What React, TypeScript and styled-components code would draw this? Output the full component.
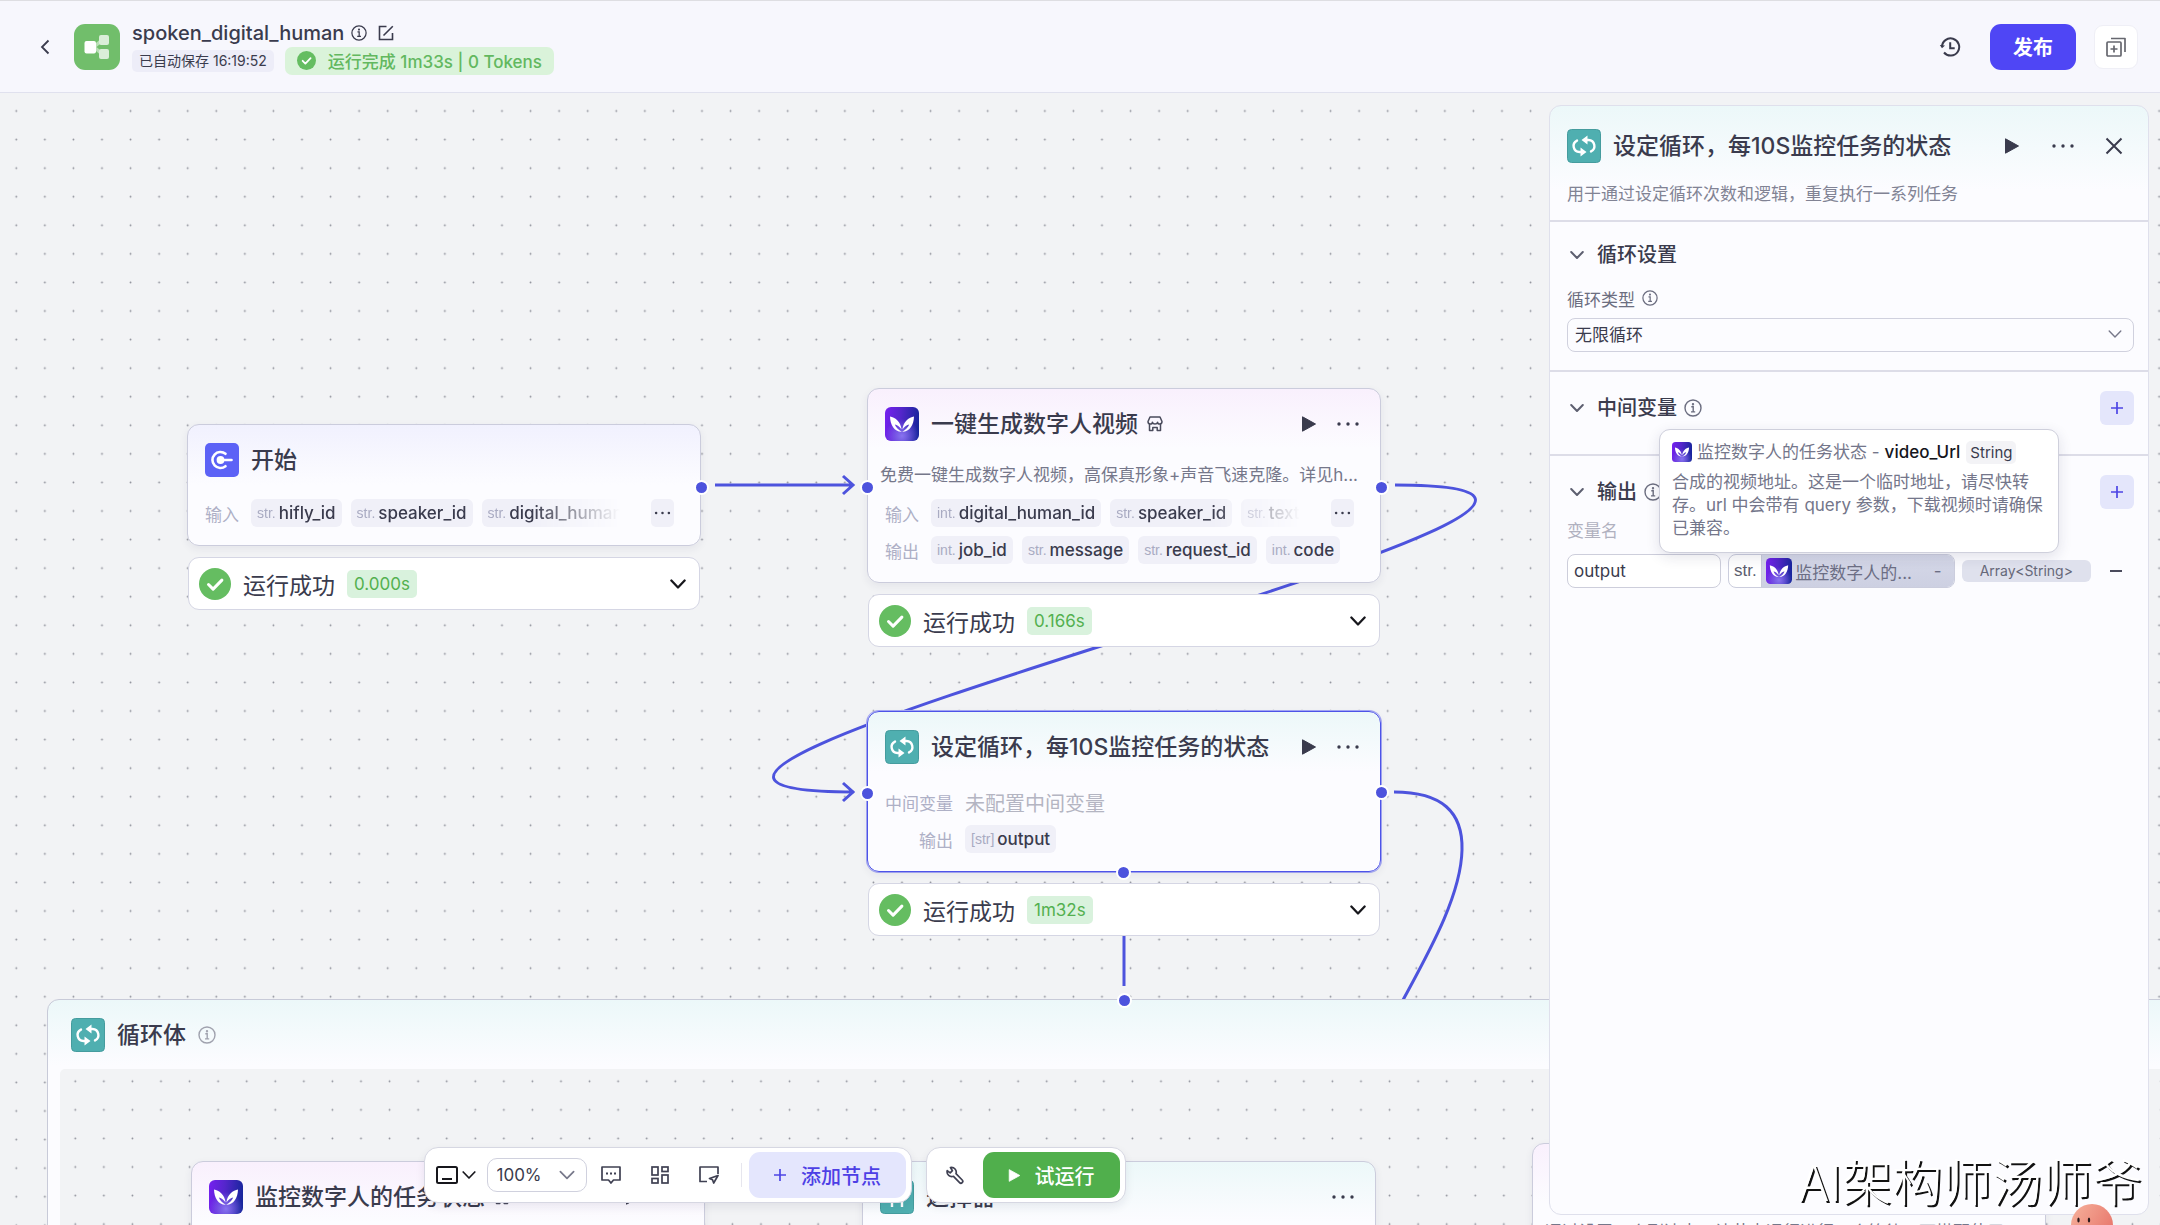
import React from 'react';
import styled, { createGlobalStyle, css } from 'styled-components';

const GlobalStyle = createGlobalStyle`
  * { box-sizing: border-box; }
  body {
    margin: 0;
    font-family: Inter, 'Noto Sans CJK SC', sans-serif;
    font-size: 17px;
    color: #3a3b4d;
    background: #f2f3f5;
  }
  button, input, select { font: inherit; color: inherit; }
  button { border: 0; padding: 0; background: none; cursor: pointer; }
  h1, h2, h3, p { margin: 0; }
  svg { display: block; flex: none; }
`;

const tint = { start: '#f1f1fe', plugin: '#f9f0fd', loop: '#ecf8f9' };
type Kind = keyof typeof tint;

/* ---------- shell ---------- */

const Shell = styled.div`
  position: relative;
  display: flex;
  flex-direction: column;
  height: 100vh;
  overflow: hidden;
`;

const TopBar = styled.header`
  position: relative;
  z-index: 2;
  display: flex;
  align-items: center;
  flex: none;
  height: 93px;
  padding: 0 22px 0 32px;
  background: #f7f7fd;
  border-top: 1px solid #dedee2;
  border-bottom: 1px solid #e0e1ee;
`;

const BackButton = styled.button`
  display: grid;
  place-items: center;
  width: 26px;
  height: 32px;
  margin-right: 16px;
`;

const Heading = styled.div`
  display: flex;
  flex-direction: column;
  flex: 1;
  margin-left: 12px;
`;

const HeadLine = styled.div`
  display: flex;
  align-items: center;
  gap: 7px;
  height: 28px;
`;

const ProjectName = styled.h1`
  font-size: 20px;
  font-weight: 500;
  line-height: 28px;
`;

const SavedTag = styled.span`
  margin-right: 4px;
  padding: 0 7px;
  border-radius: 5px;
  background: #ededf8;
  font-size: 14px;
  line-height: 22px;
`;

const RunTag = styled.span`
  display: flex;
  align-items: center;
  gap: 12px;
  height: 28px;
  padding: 0 12px;
  border-radius: 7px;
  background: #daf3da;
  color: #62b85f;
  font-size: 17px;
  font-weight: 500;
`;

const PublishButton = styled.button`
  width: 86px;
  height: 46px;
  margin: 0 18px 0 28px;
  border-radius: 11px;
  background: #4f46f5;
  color: #fff;
  font-size: 20px;
  font-weight: 600;
`;

const SquareButton = styled.button`
  display: grid;
  place-items: center;
  width: 44px;
  height: 44px;
  border-radius: 9px;
  border: 1px solid #efeff6;
  background: #fff;
`;

const PlainButton = styled.button`
  display: grid;
  place-items: center;
  flex: none;
  width: 24px;
  height: 28px;
`;

const Workspace = styled.main`
  position: relative;
  z-index: 1;
  display: flex;
  flex: 1;
  min-height: 0;
  padding: 12px 11px 10px 0;
  pointer-events: none;
  > * > *, > aside { pointer-events: auto; }
`;

const Stage = styled.div`
  display: flex;
  flex: 1;
  justify-content: center;
  align-items: flex-end;
  gap: 14px;
  padding-bottom: 12px;
`;

/* ---------- canvas ---------- */

const Board = styled.div`
  position: absolute;
  inset: 0;
  overflow: hidden;
`;

const Layer = styled.svg`
  position: absolute;
  inset: 0;
  width: 100%;
  height: 100%;
`;

const Placed = styled.div<{ $x: number; $y: number }>`
  position: absolute;
  left: ${p => p.$x}px;
  top: ${p => p.$y}px;
  width: 514px;
`;

const Card = styled.section<{ $kind: Kind; $active?: boolean }>`
  position: relative;
  padding: 17px 17px 18px;
  border: 1px solid ${p => (p.$active ? '#4d53e8' : '#cbccdc')};
  box-shadow: 0 3px 8px rgba(40, 40, 80, 0.07)${p => (p.$active ? ', 0 0 0 1px #a4a7f4' : '')};
  border-radius: 12px;
  background: linear-gradient(${p => tint[p.$kind]}, #fcfcff 60px);
`;

const CardHead = styled.div<{ $gap: number }>`
  display: flex;
  align-items: center;
  height: 35px;
  margin-bottom: ${p => p.$gap}px;
`;

const CardTitle = styled.h2`
  margin: 0 9px 0 12px;
  font-size: 23px;
  font-weight: 500;
  line-height: 34px;
  white-space: nowrap;
`;

const CardTools = styled.div`
  display: flex;
  gap: 15px;
  margin-left: auto;
  padding-right: 3px;
`;

const CardText = styled.p`
  margin: 0 -5px 12px;
  line-height: 24px;
  color: #75778a;
  white-space: nowrap;
`;

const Field = styled.div<{ $wide?: boolean }>`
  display: grid;
  grid-template-columns: ${p => (p.$wide ? '68px' : '34px')} minmax(0, 1fr);
  gap: 12px;
  align-items: center;
  height: 28px;
  & + & { margin-top: 9px; }
`;

const FieldName = styled.span`
  color: #aeb0c6;
  text-align: right;
  white-space: nowrap;
`;

const FieldBody = styled.div`
  display: flex;
  align-items: center;
  min-width: 0;
`;

const Chips = styled.div<{ $fade?: boolean }>`
  display: flex;
  flex: 1;
  gap: 9px;
  min-width: 0;
  overflow: hidden;
  ${p => p.$fade && css`
    mask-image: linear-gradient(to left, transparent 22px, #000 110px);
  `}
`;

const Chip = styled.span`
  display: flex;
  align-items: center;
  gap: 3px;
  flex: none;
  height: 28px;
  padding: 0 6px;
  border-radius: 6px;
  background: #f0f0f8;
  font-weight: 500;
`;

const TypeMark = styled.span`
  font-family: 'Liberation Sans', sans-serif;
  font-size: 14px;
  font-weight: 400;
  color: #a9abc2;
`;

const MoreChip = styled.button`
  display: grid;
  place-items: center;
  flex: none;
  width: 23px;
  height: 28px;
  margin: 0 9px;
  border-radius: 5px;
  background: #f0f0f8;
`;

const Muted = styled.span`
  font-size: 20px;
  color: #b4b5c2;
`;

const StatusBar = styled.div`
  display: flex;
  align-items: center;
  height: 53px;
  margin: 11px 1px 0;
  padding: 0 9px 0 10px;
  border: 1px solid #d5d6e4;
  border-radius: 11px;
  background: #fff;
  font-size: 23px;
`;

const StatusText = styled.span`
  margin: 0 12px;
`;

const StatusTime = styled.span`
  margin-right: auto;
  padding: 0 7px;
  border-radius: 5px;
  background: #d9f2dd;
  color: #53b04f;
  font-size: 17px;
  line-height: 28px;
`;

const Port = styled.i<{ $side: 'left' | 'right' | 'middle'; $y: number }>`
  position: absolute;
  top: ${p => p.$y - 8}px;
  ${p => p.$side === 'left' && 'left: -8px;'}
  ${p => p.$side === 'right' && 'right: -9px;'}
  ${p => p.$side === 'middle' && 'left: calc(50% - 8px);'}
  width: 15px;
  height: 15px;
  border: 2px solid #fff;
  border-radius: 50%;
  background: #4d53dd;
`;

const LoopFrame = styled.section`
  position: absolute;
  left: 47px;
  top: 999px;
  right: -40px;
  height: 480px;
  padding: 0 12px;
  border: 1px solid #c8cad8;
  border-radius: 12px;
  background: linear-gradient(${tint.loop}, #fcfcff 66px);
`;

const LoopHead = styled.div`
  display: flex;
  align-items: center;
  height: 69px;
  padding-left: 11px;
`;

const LoopInner = styled.div`
  position: relative;
  height: 400px;
  border-radius: 5px;
  overflow: hidden;
  background: #f2f3f5;
`;

const LoopPort = styled.i`
  position: absolute;
  left: 1117px;
  top: 993px;
  width: 15px;
  height: 15px;
  border: 2px solid #fff;
  border-radius: 50%;
  background: #4d53dd;
`;

/* ---------- bottom toolbar ---------- */

const Dock = styled.div`
  display: flex;
  align-items: center;
  height: 56px;
  padding: 0 5px 0 11px;
  border: 1px solid #d6d7e2;
  border-radius: 14px;
  background: #fff;
  box-shadow: 0 4px 10px rgba(30, 30, 70, 0.08);
`;

const DockIcon = styled.button`
  display: grid;
  place-items: center;
  width: 49px;
  height: 32px;
`;

const DebugButton = styled(DockIcon)`
  width: 33px;
  margin-right: 12px;
`;

const DockMode = styled.button`
  display: flex;
  align-items: center;
  gap: 4px;
  height: 32px;
  margin-right: 11px;
`;

const Pick = styled.span<{ $w: string; $radius: number }>`
  position: relative;
  display: block;
  width: ${p => p.$w};
  height: 34px;
  > select {
    width: 100%;
    height: 100%;
    padding: 0 ${p => p.$radius - 1}px;
    border: 1px solid #d0d1de;
    border-radius: ${p => p.$radius}px;
    background: transparent;
    appearance: none;
  }
  > svg {
    position: absolute;
    right: 12px;
    top: 9px;
    pointer-events: none;
  }
`;

const Rule = styled.i`
  width: 1px;
  height: 24px;
  margin: 0 7px;
  background: #e6e6ee;
`;

const WideButton = styled.button<{ $w: number; $fill: string; $ink: string }>`
  display: flex;
  align-items: center;
  justify-content: center;
  gap: 14px;
  width: ${p => p.$w}px;
  height: 46px;
  border-radius: 11px;
  background: ${p => p.$fill};
  color: ${p => p.$ink};
  font-size: 20px;
  font-weight: 500;
`;

/* ---------- side panel ---------- */

const Panel = styled.aside`
  position: relative;
  width: 600px;
  border: 1px solid #dfe0ec;
  border-radius: 12px;
  background: linear-gradient(${tint.loop}, #fcfcff 84px);
`;

const PanelHead = styled.div`
  padding: 23px 15px 14px 17px;
  border-bottom: 2px solid #dddde8;
`;

const PanelTitleRow = styled.div`
  display: flex;
  align-items: center;
  height: 34px;
  margin-bottom: 19px;
`;

const PanelTools = styled.div`
  display: flex;
  gap: 27px;
  margin-left: auto;
  padding-right: 7px;
`;

const PanelText = styled.p`
  line-height: 24px;
  color: #818394;
`;

const Section = styled.section<{ $foot: number; $last?: boolean }>`
  padding: 19px 14px ${p => p.$foot}px 17px;
  border-bottom: ${p => (p.$last ? '0' : '2px solid #dddde8')};
`;

const SectionHead = styled.div<{ $h: number }>`
  display: flex;
  align-items: center;
  height: ${p => p.$h}px;
`;

const SectionTitle = styled.h3`
  margin: 0 7px 0 10px;
  font-size: 20px;
  font-weight: 500;
  line-height: 28px;
`;

const FoldButton = styled.button`
  display: grid;
  place-items: center;
  width: 20px;
  height: 28px;
`;

const AddButton = styled.button`
  display: grid;
  place-items: center;
  width: 34px;
  height: 34px;
  margin-left: auto;
  border-radius: 6px;
  background: #e4e6fb;
`;

const Label = styled.label`
  display: flex;
  align-items: center;
  gap: 7px;
  height: 24px;
  margin: 17px 0 8px;
  color: #6c6e80;
`;

const ColumnLabel = styled.label`
  display: block;
  margin: 10px 0 11px;
  line-height: 24px;
  color: #b0b1bf;
`;

const OutputRow = styled.div`
  display: grid;
  grid-template-columns: 154fr 226fr 129fr 36fr;
  gap: 7px;
  align-items: center;
`;

const TextBox = styled.input`
  min-width: 0;
  height: 34px;
  padding: 0 6px;
  border: 1px solid #cdcedb;
  border-radius: 8px;
  background: #fff;
`;

const RefBox = styled.button`
  display: flex;
  height: 34px;
  min-width: 0;
  border: 1px solid #cbcddd;
  border-radius: 8px;
  overflow: hidden;
  background: #fff;
`;

const RefType = styled.span`
  width: 32px;
  font-family: 'Liberation Sans', sans-serif;
  line-height: 32px;
  color: #5d5f71;
`;

const RefValue = styled.span`
  display: flex;
  align-items: center;
  gap: 3px;
  flex: 1;
  height: 32px;
  padding: 0 12px 0 4px;
  border-left: 1px solid #c9cbda;
  background: linear-gradient(#d5d8e8, #cdd0e2);
  color: #6c6e84;
  white-space: nowrap;
`;

const RefName = styled.span`
  flex: 1;
  text-align: left;
`;

const TypeTag = styled.span`
  border-radius: 6px;
  background: #dfe1ed;
  color: #666879;
  font-size: 14px;
  line-height: 22px;
  text-align: center;
`;

const RemoveButton = styled.button`
  display: grid;
  place-items: center;
  height: 34px;
`;

const Tip = styled.div`
  position: absolute;
  left: 109px;
  top: 323px;
  width: 400px;
  padding: 10px 12px 12px;
  border: 1px solid #cfd0dc;
  border-radius: 11px;
  background: #fff;
  box-shadow: 0 4px 14px rgba(30, 30, 70, 0.12);
  color: #74768a;
  line-height: 23px;
`;

const TipHead = styled.div`
  display: flex;
  align-items: center;
  height: 24px;
  margin-bottom: 7px;
  white-space: nowrap;
  > strong { margin: 0 6px 0 5px; font-weight: 500; color: #15151c; }
  > span { margin-left: 5px; }
`;

const TipType = styled.em`
  padding: 0 4px;
  border-radius: 5px;
  background: #f3f3f6;
  color: #3a3b4d;
  font-size: 15px;
  font-style: normal;
`;

/* ---------- watermark and assistant ---------- */

const Watermark = styled.div`
  position: absolute;
  z-index: 3;
  right: 18px;
  bottom: 11px;
  color: #fff;
  font-family: 'Noto Sans CJK SC', sans-serif;
  font-size: 50px;
  font-weight: 300;
  line-height: 70px;
  text-shadow: 2px 2px 0 #111;
  white-space: nowrap;
`;

const Mascot = styled.svg`
  position: absolute;
  z-index: 2;
  right: 46px;
  bottom: 0;
`;

/* ---------- drawings ---------- */

const ButterflyIcon = ({ size = 34 }: { size?: number }) => {
  const id = React.useId();
  return (
    <svg width={size} height={size} viewBox="0 0 34 34">
      <defs>
        <linearGradient id={id} x1="0" y1="0.3" x2="1" y2="0.4">
          <stop offset="0" stopColor="#7420ee" />
          <stop offset="0.45" stopColor="#5426cb" />
          <stop offset="1" stopColor="#17259c" />
        </linearGradient>
        <radialGradient id={`${id}g`} cx="0.5" cy="0.85" r="0.5">
          <stop offset="0" stopColor="#8f7cf5" stopOpacity="0.9" />
          <stop offset="1" stopColor="#8f7cf5" stopOpacity="0" />
        </radialGradient>
      </defs>
      <rect width="34" height="34" rx="6" fill={`url(#${id})`} />
      <rect width="34" height="34" rx="6" fill={`url(#${id}g)`} />
      <g fill="#fff">
        <path d="M5 9.5C10 10.5 15.500 14 16.600 22.500C14.500 19.500 12 17.800 9.800 17.600C10.800 20.500 13.500 23.200 16.800 24.800C9.500 25 5.200 18 5 9.500Z" />
        <path d="M29 9.5C24 10.5 18.500 14 17.400 22.500C19.500 19.500 22 17.800 24.200 17.600C23.200 20.500 20.500 23.200 17.200 24.800C24.500 25 28.800 18 29 9.500Z" />
      </g>
    </svg>
  );
};

const LoopIcon = () => (
  <svg width="34" height="34" viewBox="0 0 34 34">
    <rect x="0.500" y="0.500" width="33" height="33" rx="4" fill="#4fafb0" stroke="#459c9e" />
    <g fill="none" stroke="#fff" strokeWidth="2.4" strokeLinecap="round">
      <path d="M19 11h2.500a6 6 0 0 1 2.500 11.400" />
      <path d="M15 23h-2.500a6 6 0 0 1-2.500-11.400" />
    </g>
    <path d="M14.500 11l6-4.500v9z M19.500 23l-6 4.500v-9z" fill="#fff" />
  </svg>
);

const StartIcon = () => (
  <svg width="34" height="34" viewBox="0 0 34 34">
    <rect width="34" height="34" rx="5" fill="#5c62f6" />
    <path d="M20.500 10.800a8 8 0 1 0 0 12.400" fill="none" stroke="#fff" strokeWidth="2.600" strokeLinecap="round" />
    <circle cx="15.500" cy="17" r="3.900" fill="#fff" />
    <path d="M16 17h10.500" stroke="#fff" strokeWidth="2.600" strokeLinecap="round" />
  </svg>
);

const BranchIcon = () => (
  <svg width="34" height="34" viewBox="0 0 34 34">
    <rect x="0.500" y="0.500" width="33" height="33" rx="4" fill="#4fafb0" stroke="#459c9e" />
    <path d="M12 27V12M12 12l-4 4M22 27V10M22 18h-9" fill="none" stroke="#fff" strokeWidth="2.400" />
  </svg>
);

const Logo = () => (
  <svg width="46" height="46" viewBox="0 0 46 46">
    <rect width="46" height="46" rx="11" fill="#71be6b" />
    <path d="M20 23L28 16M20 23L28 30" stroke="#b9dfb6" strokeWidth="3.500" />
    <rect x="25" y="11" width="10" height="10" rx="2" fill="#daeed8" />
    <rect x="25" y="25" width="10" height="10" rx="2" fill="#daeed8" />
    <rect x="10.500" y="17" width="11.500" height="12.500" rx="2" fill="#fff" />
  </svg>
);

const InfoIcon = ({ size = 18, color = '#6c6e80' }: { size?: number; color?: string }) => (
  <svg width={size} height={size} viewBox="0 0 18 18" fill="none" stroke={color} strokeWidth="1.400">
    <circle cx="9" cy="9" r="8" />
    <path d="M7.300 7.800h1.900v5M7 12.900h4.200" />
    <circle cx="9" cy="5.200" r="0.500" fill={color} />
  </svg>
);

const Chevron = ({ w = 14, color = '#17171c', stroke = 2 }: { w?: number; color?: string; stroke?: number }) => (
  <svg width={w} height={w} viewBox="0 0 14 14" fill="none" stroke={color} strokeWidth={stroke} strokeLinecap="round" strokeLinejoin="round">
    <path d="M1.200 4l5.800 6 5.800-6" />
  </svg>
);

const PlayIcon = ({ w = 16, color = '#3a3b4d' }: { w?: number; color?: string }) => (
  <svg width={w} height={w} viewBox="0 0 16 16">
    <path d="M1.500 0.800L14.500 8L1.500 15.200Z" fill={color} stroke={color} strokeLinejoin="round" />
  </svg>
);

const DotsIcon = ({ w = 24, r = 1.7 }: { w?: number; r?: number }) => (
  <svg width={w} height="6" viewBox="0 0 24 6" fill="#3a3b4d">
    <circle cx="3" cy="3" r={r} />
    <circle cx="12" cy="3" r={r} />
    <circle cx="21" cy="3" r={r} />
  </svg>
);

const PlusIcon = ({ color = '#4d46e5' }: { color?: string }) => (
  <svg width="14" height="14" viewBox="0 0 14 14" stroke={color} strokeWidth="1.700">
    <path d="M7 1v12M1 7h12" />
  </svg>
);

const CheckIcon = ({ size }: { size: number }) => (
  <svg width={size} height={size} viewBox="0 0 32 32">
    <circle cx="16" cy="16" r="16" fill="#65bd61" />
    <path d="M9.500 16.500l4.600 4.600 8.800-9" fill="none" stroke="#fff" strokeWidth="3" strokeLinecap="round" strokeLinejoin="round" />
  </svg>
);

const ShopIcon = () => (
  <svg width="16" height="16" viewBox="0 0 16 16" fill="none" stroke="#4a4b5c" strokeWidth="1.500" strokeLinejoin="round">
    <path d="M3 1h10l2 4.500c0 2-1.500 2.500-2.300 2.500C11.500 8 10.600 7 10.600 6.200 10.300 7.400 9.200 8 8 8S5.700 7.400 5.400 6.200C5.400 7 4.500 8 3.300 8 2.500 8 1 7.500 1 5.500z" />
    <path d="M2.500 8v6.500h3.300v-3h4.400v3h3.300V8" />
  </svg>
);

/* ---------- composed parts ---------- */

const TypedChip = ({ type, name }: { type: string; name: string }) => (
  <Chip>
    <TypeMark>{type}</TypeMark>
    {name}
  </Chip>
);

const RunStatus = ({ time }: { time: string }) => (
  <StatusBar>
    <CheckIcon size={32} />
    <StatusText>运行成功</StatusText>
    <StatusTime>{time}</StatusTime>
    <PlainButton aria-label="展开">
      <Chevron w={16} />
    </PlainButton>
  </StatusBar>
);

const NodeTools = () => (
  <CardTools>
    <PlainButton aria-label="运行"><PlayIcon /></PlainButton>
    <PlainButton aria-label="更多"><DotsIcon /></PlainButton>
  </CardTools>
);

const More = () => (
  <MoreChip aria-label="更多变量"><DotsIcon w={17} r={1.8} /></MoreChip>
);

const GridPattern = ({ id, x, y }: { id: string; x: number; y: number }) => (
  <>
    <defs>
      <pattern id={id} width="20" height="20" patternUnits="userSpaceOnUse" patternTransform={`translate(${x} ${y}) scale(${10 / 7})`}>
        <circle cx="10" cy="10" r="0.640" fill="#8c8e98" />
      </pattern>
    </defs>
    <rect width="100%" height="100%" fill={`url(#${id})`} />
  </>
);

export default function App() {
  return (
    <Shell>
      <GlobalStyle />
      <TopBar>
        <BackButton aria-label="返回">
          <svg width="10" height="16" viewBox="0 0 10 16" fill="none" stroke="#3a3b4d" strokeWidth="1.800"><path d="M8.500 1.500L2 8l6.500 6.500" /></svg>
        </BackButton>
        <Logo />
        <Heading>
          <HeadLine>
            <ProjectName>spoken_digital_human</ProjectName>
            <InfoIcon size={16} color="#3a3b4d" />
            <PlainButton aria-label="编辑">
              <svg width="16" height="16" viewBox="0 0 16 16" fill="none" stroke="#3a3b4d" strokeWidth="1.600"><path d="M8.500 1.500H1.500v13h13V8M5.500 10.500L14.800 1.200" /></svg>
            </PlainButton>
          </HeadLine>
          <HeadLine>
            <SavedTag>已自动保存 16:19:52</SavedTag>
            <RunTag>
              <CheckIcon size={19} />
              运行完成 1m33s | 0 Tokens
            </RunTag>
          </HeadLine>
        </Heading>
        <PlainButton aria-label="历史">
          <svg width="22" height="22" viewBox="0 0 22 22" fill="none" stroke="#3a3b4d" strokeWidth="2">
            <path d="M3 11a8.600 8.600 0 1 1 2 5.500" />
            <path d="M11.200 6.200v6h4.500" />
            <path d="M0.800 9l2.200 3.200L6 9.400z" fill="#3a3b4d" stroke="none" />
          </svg>
        </PlainButton>
        <PublishButton>发布</PublishButton>
        <SquareButton aria-label="创建副本">
          <svg width="20" height="20" viewBox="0 0 20 20" fill="none" stroke="#66676f" strokeWidth="1.700" strokeLinejoin="round">
            <rect x="1" y="5" width="14" height="14" rx="1" />
            <path d="M5 1.500h14V15M8 8.500v7M4.500 12h7" />
          </svg>
        </SquareButton>
      </TopBar>

      <Board>
        <Layer>
          <GridPattern id="grid" x={2} y={11} />
          <g fill="none" stroke="#4d53dd" strokeWidth="3">
            <path d="M715 485H853M843 476l10 9-10 9" />
            <path d="M1395 485C1815 485 434 792 854 792M843 783l10 9-10 9" />
            <path d="M1394 792C1442 792 1463 812 1462 850C1461 895 1430 950 1403 1000" />
            <path d="M1124 930V986" />
          </g>
        </Layer>

        <LoopFrame>
          <LoopHead>
            <LoopIcon />
            <CardTitle>循环体</CardTitle>
            <PlainButton aria-label="说明"><InfoIcon color="#a0a2ae" /></PlainButton>
          </LoopHead>
          <LoopInner>
            <Layer><GridPattern id="grid-inner" x={1} y={-2} /></Layer>
          </LoopInner>
        </LoopFrame>
        <LoopPort />

        <Placed $x={187} $y={424}>
          <Card $kind="start">
            <CardHead $gap={22}>
              <StartIcon />
              <CardTitle>开始</CardTitle>
            </CardHead>
            <Field>
              <FieldName>输入</FieldName>
              <FieldBody>
                <Chips $fade>
                  <TypedChip type="str." name="hifly_id" />
                  <TypedChip type="str." name="speaker_id" />
                  <TypedChip type="str." name="digital_human" />
                </Chips>
                <More />
              </FieldBody>
            </Field>
            <Port $side="right" $y={63} />
          </Card>
          <RunStatus time="0.000s" />
        </Placed>

        <Placed $x={867} $y={388}>
          <Card $kind="plugin">
            <CardHead $gap={22}>
              <ButterflyIcon />
              <CardTitle>一键生成数字人视频</CardTitle>
              <ShopIcon />
              <NodeTools />
            </CardHead>
            <CardText>免费一键生成数字人视频，高保真形象+声音飞速克隆。详见h...</CardText>
            <Field>
              <FieldName>输入</FieldName>
              <FieldBody>
                <Chips $fade>
                  <TypedChip type="int." name="digital_human_id" />
                  <TypedChip type="str." name="speaker_id" />
                  <TypedChip type="str." name="text" />
                </Chips>
                <More />
              </FieldBody>
            </Field>
            <Field>
              <FieldName>输出</FieldName>
              <Chips>
                <TypedChip type="int." name="job_id" />
                <TypedChip type="str." name="message" />
                <TypedChip type="str." name="request_id" />
                <TypedChip type="int." name="code" />
              </Chips>
            </Field>
            <Port $side="left" $y={99} />
            <Port $side="right" $y={99} />
          </Card>
          <RunStatus time="0.166s" />
        </Placed>

        <Placed $x={867} $y={711}>
          <Card $kind="loop" $active>
            <CardHead $gap={24}>
              <LoopIcon />
              <CardTitle>设定循环，每10S监控任务的状态</CardTitle>
              <NodeTools />
            </CardHead>
            <Field $wide>
              <FieldName>中间变量</FieldName>
              <Muted>未配置中间变量</Muted>
            </Field>
            <Field $wide>
              <FieldName>输出</FieldName>
              <Chips><TypedChip type="[str]" name="output" /></Chips>
            </Field>
            <Port $side="left" $y={82} />
            <Port $side="right" $y={81} />
            <Port $side="middle" $y={161} />
          </Card>
          <RunStatus time="1m32s" />
        </Placed>

        <Placed $x={191} $y={1161}>
          <Card $kind="plugin">
            <CardHead $gap={24}>
              <ButterflyIcon />
              <CardTitle>监控数字人的任务状态</CardTitle>
              <ShopIcon />
              <NodeTools />
            </CardHead>
          </Card>
        </Placed>

        <Placed $x={862} $y={1161}>
          <Card $kind="loop">
            <CardHead $gap={24}>
              <BranchIcon />
              <CardTitle>选择器</CardTitle>
              <CardTools><PlainButton aria-label="更多"><DotsIcon /></PlainButton></CardTools>
            </CardHead>
          </Card>
        </Placed>

        <Placed $x={1532} $y={1143}>
          <Card $kind="plugin">
            <CardHead $gap={24} />
            <CardText>通过设置一个到达点，让节点运行进行一个等待，可搭配使用</CardText>
          </Card>
        </Placed>
      </Board>

      <Workspace>
        <Stage>
          <Dock>
            <DockMode aria-label="画布模式">
              <svg width="22" height="18" viewBox="0 0 22 18" fill="none" stroke="#17171c" strokeWidth="2"><rect x="1" y="1" width="20" height="16" rx="1.500" /><path d="M6 13h10" /></svg>
              <Chevron w={14} stroke={1.7} />
            </DockMode>
            <Pick $w="100px" $radius={10}>
              <select aria-label="缩放" defaultValue="100%"><option>100%</option></select>
              <Chevron w={16} color="#77788a" stroke={1.5} />
            </Pick>
            <DockIcon aria-label="评论">
              <svg width="20" height="19" viewBox="0 0 20 19" fill="none" stroke="#3f4052" strokeWidth="1.700" strokeLinejoin="round"><path d="M1 1h18v13h-6.500L10 17l-2.500-3H1z" /><path d="M5 7.500h2M9 7.500h2M13 7.500h2" strokeWidth="2" /></svg>
            </DockIcon>
            <DockIcon aria-label="整理">
              <svg width="18" height="18" viewBox="0 0 18 18" fill="none" stroke="#3f4052" strokeWidth="1.700"><rect x="1" y="1" width="6" height="8" /><rect x="11" y="1" width="6" height="4.500" /><rect x="1" y="12.500" width="6" height="4.500" /><rect x="11" y="9" width="6" height="8" /></svg>
            </DockIcon>
            <DockIcon aria-label="便签">
              <svg width="20" height="18" viewBox="0 0 20 18" fill="none" stroke="#3f4052" strokeWidth="1.700" strokeLinejoin="round"><path d="M8 15.500H1V1h18v7" /><path d="M19 9.500l-8.500 3 3 1.200 1.200 3.300z" /></svg>
            </DockIcon>
            <Rule />
            <WideButton $w={157} $fill="#e4e6fd" $ink="#4d40e5">
              <PlusIcon />
              添加节点
            </WideButton>
          </Dock>
          <Dock>
            <DebugButton aria-label="调试">
              <svg width="19" height="19" viewBox="0 0 19 19" fill="none" stroke="#3f4052" strokeWidth="1.700" strokeLinejoin="round" transform="scale(-1 1)"><path d="M16.800 5.200l-3 2.200-2.200-2.200L13.500 2A4.800 4.800 0 0 0 8 8.200L1.800 14.500a1.600 1.600 0 0 0 2.600 2.600L10.500 10.800a4.800 4.800 0 0 0 6.300-5.600z" transform="translate(0 -0.500)" /></svg>
            </DebugButton>
            <WideButton $w={137} $fill="#50af4c" $ink="#fff">
              <PlayIcon w={13} color="#fff" />
              试运行
            </WideButton>
          </Dock>
        </Stage>

        <Panel>
          <PanelHead>
            <PanelTitleRow>
              <LoopIcon />
              <CardTitle>设定循环，每10S监控任务的状态</CardTitle>
              <PanelTools>
                <PlainButton aria-label="运行"><PlayIcon /></PlainButton>
                <PlainButton aria-label="更多"><DotsIcon /></PlainButton>
                <PlainButton aria-label="关闭">
                  <svg width="18" height="18" viewBox="0 0 18 18" stroke="#3a3b4d" strokeWidth="2"><path d="M1.500 1.500l15 15M16.500 1.500l-15 15" /></svg>
                </PlainButton>
              </PanelTools>
            </PanelTitleRow>
            <PanelText>用于通过设定循环次数和逻辑，重复执行一系列任务</PanelText>
          </PanelHead>

          <Section $foot={18}>
            <SectionHead $h={28}>
              <FoldButton aria-label="折叠"><Chevron color="#5d5f70" /></FoldButton>
              <SectionTitle>循环设置</SectionTitle>
            </SectionHead>
            <Label htmlFor="loop-type">循环类型 <InfoIcon size={16} /></Label>
            <Pick $w="100%" $radius={8}>
              <select id="loop-type" defaultValue="无限循环"><option>无限循环</option></select>
              <Chevron color="#77788a" stroke={1.4} />
            </Pick>
          </Section>

          <Section $foot={29}>
            <SectionHead $h={34}>
              <FoldButton aria-label="折叠"><Chevron color="#5d5f70" /></FoldButton>
              <SectionTitle>中间变量</SectionTitle>
              <InfoIcon />
              <AddButton aria-label="添加中间变量"><PlusIcon /></AddButton>
            </SectionHead>
          </Section>

          <Section $foot={0} $last>
            <SectionHead $h={34}>
              <FoldButton aria-label="折叠"><Chevron color="#5d5f70" /></FoldButton>
              <SectionTitle>输出</SectionTitle>
              <InfoIcon />
              <AddButton aria-label="添加输出"><PlusIcon /></AddButton>
            </SectionHead>
            <ColumnLabel htmlFor="out-name">变量名</ColumnLabel>
            <OutputRow>
              <TextBox id="out-name" defaultValue="output" />
              <RefBox>
                <RefType>str.</RefType>
                <RefValue>
                  <ButterflyIcon size={26} />
                  <RefName>监控数字人的...</RefName>
                  <span>-</span>
                </RefValue>
              </RefBox>
              <TypeTag>Array&lt;String&gt;</TypeTag>
              <RemoveButton aria-label="删除">
                <svg width="12" height="4" viewBox="0 0 12 4"><path d="M0 2h12" stroke="#4a4b5c" strokeWidth="2" /></svg>
              </RemoveButton>
            </OutputRow>
          </Section>

          <Tip role="tooltip">
            <TipHead>
              <ButterflyIcon size={20} />
              <span>监控数字人的任务状态 -</span>
              <strong>video_Url</strong>
              <TipType>String</TipType>
            </TipHead>
            <p>合成的视频地址。这是一个临时地址，请尽快转存。url 中会带有 query 参数，下载视频时请确保已兼容。</p>
          </Tip>
        </Panel>
      </Workspace>

      <Mascot width="44" height="22" viewBox="0 0 44 22">
        <defs>
          <linearGradient id="mascot" x1="0" y1="0" x2="1" y2="0.600">
            <stop offset="0" stopColor="#f6b29c" />
            <stop offset="1" stopColor="#e8776c" />
          </linearGradient>
        </defs>
        <ellipse cx="22" cy="22" rx="21" ry="21" fill="url(#mascot)" />
        <ellipse cx="8.500" cy="17" rx="1.200" ry="2.500" fill="#2b1a1c" />
        <ellipse cx="19" cy="17" rx="1.200" ry="2.500" fill="#2b1a1c" />
      </Mascot>
      <Watermark>AI架构师汤师爷</Watermark>
    </Shell>
  );
}
